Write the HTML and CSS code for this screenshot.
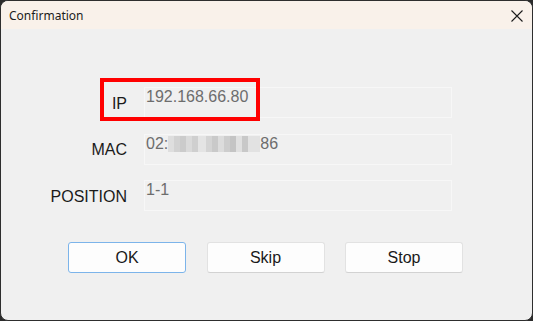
FILE: index.html
```html
<!DOCTYPE html>
<html lang="en">
<head>
    <meta charset="UTF-8">
    <title>Confirmation</title>
    <link rel="stylesheet" href="styles.css">
</head>
<body>
    <div class="window">
        <div class="titlebar">
            <span class="title">Confirmation</span>
            <button class="close" aria-label="Close">
                <svg width="12" height="12" viewBox="0 0 12 12">
                    <path d="M0.5 0.5 L11.5 11.5 M11.5 0.5 L0.5 11.5" stroke="#1c1c1c" stroke-width="1.1" fill="none"/>
                </svg>
            </button>
        </div>
        <div class="content">
            <div class="form">
                <label class="label">IP</label>
                <div class="field">192.168.66.80</div>
                <label class="label">MAC</label>
                <div class="field">02:<span class="blur"></span>86</div>
                <label class="label">POSITION</label>
                <div class="field">1-1</div>
            </div>
            <div class="buttons">
                <button class="btn default">OK</button>
                <button class="btn">Skip</button>
                <button class="btn">Stop</button>
            </div>
            <div class="highlight"></div>
        </div>
    </div>
</body>
</html>
```

FILE: styles.css
```css
html {
    background-color: #2b2b2b;
}
body {
    margin: 0;
    font-family: "Liberation Sans", Arial, sans-serif;
}
.window {
    width: 533px;
    height: 321px;
    box-sizing: border-box;
    border: 1px solid #2e2e2e;
    border-radius: 8px;
    background-color: #f0f0f0;
    overflow: hidden;
}
.titlebar {
    height: 28px;
    display: flex;
    justify-content: space-between;
    align-items: center;
    background-color: #f9f1ea;
}
.title {
    font-family: "Noto Sans", sans-serif;
    font-size: 12px;
    color: #1c1c1c;
    padding-left: 8px;
}
.close {
    border: none;
    background: none;
    padding: 0;
    margin-right: 9px;
    margin-top: 2px;
    width: 12px;
    height: 12px;
    display: flex;
}
.content {
    position: relative;
    padding-top: 58px;
}
.form {
    display: grid;
    grid-template-columns: 126px 308px;
    grid-auto-rows: 31px;
    column-gap: 17px;
    row-gap: 15.5px;
}
.label {
    font-size: 16px;
    color: #1a1a1a;
    text-align: right;
    align-self: center;
    padding-top: 2px;
}
.field {
    box-sizing: border-box;
    border: 1px solid #f7f7f7;
    font-size: 16px;
    color: #6d6d6d;
    padding-left: 1px;
    display: flex;
    align-items: flex-start;
}
.blur {
    display: inline-block;
    width: 92px;
    height: 16px;
    margin-top: 1px;
    background:
        linear-gradient(90deg,
            #dedede 0 6px, #d2d2d2 6px 12px, #cbcbcb 12px 18px, #dadada 18px 24px,
            #cfcfcf 24px 30px, #e4e4e4 30px 38px, #d4d4d4 38px 44px, #c9c9c9 44px 50px,
            #dcdcdc 50px 56px, #cdcdcd 56px 62px, #c4c4c4 62px 68px, #e0e0e0 68px 74px,
            #c8c8c8 74px 80px, #e2e2e2 80px 92px);
}
.buttons {
    display: flex;
    gap: 20.5px;
    padding-left: 67px;
    margin-top: 31px;
}
.btn {
    width: 118px;
    height: 31px;
    box-sizing: border-box;
    font-family: "Liberation Sans", Arial, sans-serif;
    font-size: 16px;
    color: #1a1a1a;
    background-color: #fdfdfd;
    border: 1px solid #e2e2e2;
    border-bottom-color: #d2d2d2;
    border-radius: 3px;
}
.btn.default {
    border-color: #7cb4ea;
}
.highlight {
    position: absolute;
    left: 99px;
    top: 49px;
    width: 160px;
    height: 43px;
    box-sizing: border-box;
    border: 4px solid #ff0000;
}
```
